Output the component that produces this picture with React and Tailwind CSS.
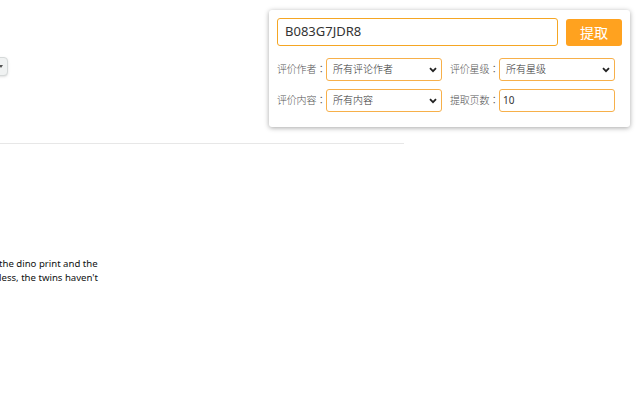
import React from "react";

const cjk = { fontFamily: '"Noto Sans", "Noto Sans CJK JP", sans-serif' };

function Chevron() {
  return (
    <svg width="8" height="6" viewBox="0 0 8 6" className="shrink-0">
      <path d="M1 1.2 L4 4.2 L7 1.2" fill="none" stroke="#222" strokeWidth="1.8" />
    </svg>
  );
}

function FakeSelect({ value }) {
  return (
    <div className="flex h-[23px] w-[116px] items-center justify-between rounded-[3px] border border-[#f7b04a] bg-white pl-[6px] pr-[4px] text-[10px] font-light text-[#333]">
      <span>{value}</span>
      <Chevron />
    </div>
  );
}

function Field({ label, children }) {
  return (
    <div className="flex items-center">
      <span className="w-[49px] whitespace-nowrap text-[10px] font-light tracking-[-0.2px] text-[#555]">{label}</span>
      {children}
    </div>
  );
}

export default function App() {
  return (
    <div className="relative h-[400px] w-[640px] overflow-hidden bg-white" style={cjk}>
      {/* page behind the popup */}
      <div className="pt-[57px]">
        <div className="-ml-[20px] flex h-[19px] w-[28px] items-center justify-end rounded-[4px] border border-[#d5d9d9] bg-[#f0f2f2] pr-[4px] shadow-sm">
          <span className="block h-0 w-0 border-x-[2px] border-t-[3px] border-x-transparent border-t-[#555]" />
        </div>
        <div className="mt-[67px] h-px w-[404px] bg-[#e7e7e7]" />
        <div
          className="mt-[113px] -ml-[1px] whitespace-nowrap text-[9.6px] leading-[14px] text-[#0f1111]"
          style={{ fontFamily: '"Noto Sans", "Liberation Sans", sans-serif' }}
        >
          <div>the dino print and the</div>
          <div>less, the twins haven't</div>
        </div>
      </div>

      {/* extension popup */}
      <div className="absolute left-[269px] top-[10px] w-[361px] rounded-[3px] bg-white pb-[15px] pl-[8px] pr-[8px] pt-[8px] shadow-[0_1px_5px_rgba(0,0,0,0.35)]">
        <div className="flex items-center gap-[8px]">
          <div className="flex h-[28px] w-[281px] items-center rounded-[3px] border-[1.5px] border-[#f5a623] pl-[7px] text-[13px] text-[#333]">
            B083G7JDR8
          </div>
          <button className="flex h-[27px] w-[56px] items-center justify-center rounded-[3px] bg-[#ffa21f] text-[14px] text-white">
            提取
          </button>
        </div>
        <div className="mt-[12px] flex flex-col gap-[8px] pr-[7px]">
          <div className="flex gap-[8px]">
            <Field label="评价作者：">
              <FakeSelect value="所有评论作者" />
            </Field>
            <Field label="评价星级：">
              <FakeSelect value="所有星级" />
            </Field>
          </div>
          <div className="flex gap-[8px]">
            <Field label="评价内容：">
              <FakeSelect value="所有内容" />
            </Field>
            <Field label="提取页数：">
              <div className="flex h-[23px] w-[116px] items-center rounded-[3px] border border-[#f7b04a] bg-white pl-[3px] text-[10px] text-[#333]">
                10
              </div>
            </Field>
          </div>
        </div>
      </div>
    </div>
  );
}
